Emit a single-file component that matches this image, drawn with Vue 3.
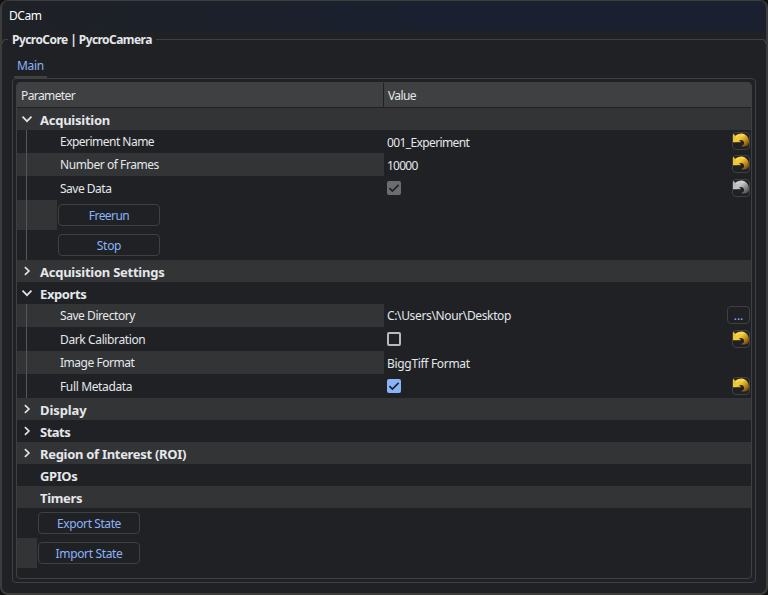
<script setup>
const rows = [
  { type: 'group', label: 'Acquisition', state: 'open', alt: true, h: 22 },
  { type: 'param', label: 'Experiment Name', track: -0.52, value: '001_Experiment', valueTrack: -0.62, reset: 'gold', h: 23, low: true },
  { type: 'param', label: 'Number of Frames', track: -0.44, value: '10000', valueTrack: -0.75, reset: 'gold', alt: true, h: 23, low: true },
  { type: 'param', label: 'Save Data', track: -0.5, check: 'disabled', reset: 'gray', h: 24 },
  { type: 'action', label: 'Freerun', track: -0.55, alt: true, nested: true, h: 30 },
  { type: 'action', label: 'Stop', track: -0.3, nested: true, h: 30 },
  { type: 'group', label: 'Acquisition Settings', state: 'closed', alt: true, h: 22 },
  { type: 'group', label: 'Exports', track: -0.4, state: 'open', h: 22 },
  { type: 'param', label: 'Save Directory', track: -0.44, value: 'C:\\Users\\Nour\\Desktop', valueTrack: -0.36, browse: true, alt: true, h: 23 },
  { type: 'param', label: 'Dark Calibration', track: -0.38, check: 'off', reset: 'gold', h: 24 },
  { type: 'param', label: 'Image Format', track: -0.48, value: 'BiggTiff Format', valueTrack: -0.32, alt: true, h: 23, low: true },
  { type: 'param', label: 'Full Metadata', track: -0.36, check: 'on', reset: 'gold', h: 24 },
  { type: 'group', label: 'Display', track: -0.1, state: 'closed', alt: true, h: 22 },
  { type: 'group', label: 'Stats', track: -0.5, state: 'closed', h: 22 },
  { type: 'group', label: 'Region of Interest (ROI)', track: -0.3, state: 'closed', alt: true, h: 22 },
  { type: 'group', label: 'GPIOs', track: -0.4, h: 22 },
  { type: 'group', label: 'Timers', track: -0.35, alt: true, h: 22 },
  { type: 'action', label: 'Export State', track: -0.42, h: 30 },
  { type: 'action', label: 'Import State', track: -0.36, alt: true, h: 30 }
]
const spacing = (px = -0.25) => ({ letterSpacing: px + 'px' })
</script>

<template>
  <div class="window">
    <header class="titlebar">DCam</header>
    <div class="legend"><i class="edge"></i><b>PycroCore | PycroCamera</b><i class="rule"></i></div>
    <nav class="tabs"><span class="tab">Main</span></nav>
    <main class="pane">
      <div class="tree">
        <div class="head"><span class="hparam">Parameter</span><span class="hvalue">Value</span></div>
        <div
          v-for="row in rows"
          :key="row.label"
          class="row"
          :class="[row.type, { alt: row.alt, nested: row.nested, low: row.low, tall: row.h === 24 }]"
          :style="{ height: row.h + 'px' }"
        >
          <template v-if="row.type === 'group'">
            <span class="arrow">
              <svg v-if="row.state" width="12" height="12" viewBox="0 0 12 12">
                <path :d="row.state === 'open' ? 'M1.5 3.7 6 8.2l4.5-4.5' : 'M3.9 2.1 7.9 6 3.9 9.9'" fill="none" stroke="#e2e3e5" stroke-width="1.7" />
              </svg>
            </span>
            <b :style="spacing(row.track)">{{ row.label }}</b>
          </template>
          <template v-else-if="row.type === 'param'">
            <span class="name" :style="spacing(row.track)">{{ row.label }}</span>
            <span class="cell">
              <span v-if="row.value" class="val" :style="spacing(row.valueTrack)">{{ row.value }}</span>
              <span v-if="row.check" class="check" :class="row.check">
                <svg v-if="row.check !== 'off'" width="14" height="14" viewBox="0 0 14 14">
                  <path d="M2.4 7.2 5.4 10.1 11.6 3.9" fill="none" stroke="#202124" stroke-width="1.6" />
                </svg>
              </span>
              <button v-if="row.browse" class="tool browse">...</button>
              <button v-if="row.reset" class="tool reset">
                <svg width="18" height="18" viewBox="0 0 18 18">
                  <defs>
                    <linearGradient id="gold" x1="0" y1="0" x2="1" y2="1">
                      <stop offset="0" stop-color="#e8b820" />
                      <stop offset=".4" stop-color="#f2cc3c" />
                      <stop offset=".66" stop-color="#c08a18" />
                      <stop offset="1" stop-color="#4a300c" />
                    </linearGradient>
                    <linearGradient id="gray" x1="0" y1="0" x2="1" y2="1">
                      <stop offset="0" stop-color="#a9a9a9" />
                      <stop offset=".4" stop-color="#c6c6c6" />
                      <stop offset=".66" stop-color="#8a8a8a" />
                      <stop offset="1" stop-color="#383838" />
                    </linearGradient>
                  </defs>
                  <path d="M1 1.6 3.3 3.8C5.6 1.6 8.6.9 11.2 1.7c3.8 1.2 6 4.6 5.8 8.6-.1 1.7-.7 2.9-1.7 3.5-1.8 1-4.4 1-6.3.2 1.9-.3 3.1-1.4 3.1-3.1 0-2.1-2.1-3.4-4.8-2.9L9.2 10.2H1Z" :fill="`url(#${row.reset})`" />
                  <path d="M4 5.1C6.3 2.9 9 2.2 11.6 3.2" fill="none" :stroke="row.reset === 'gold' ? '#ffe676' : '#dedede'" stroke-width="1.1" />
                </svg>
              </button>
            </span>
          </template>
          <template v-else>
            <span class="indent"></span>
            <button class="action-button" :style="spacing(row.track)">{{ row.label }}</button>
          </template>
        </div>
      </div>
    </main>
  </div>
</template>

<style>
body {
  margin: 0;
  background: #111211;
}
</style>

<style scoped>
* {
  box-sizing: border-box;
}
.window {
  width: 768px;
  height: 595px;
  display: flex;
  flex-direction: column;
  border: solid #3d3d3c;
  border-width: 1px 2px 2px;
  border-radius: 8px;
  background: #202124;
  color: #e4e7eb;
  font: 12px/16px "Noto Sans", "Open Sans", sans-serif;
  overflow: hidden;
}
button {
  font: inherit;
  padding: 0;
  color: #8ab4f8;
  background: #202124;
  border: 1px solid #3f4042;
  border-radius: 4px;
}
.titlebar {
  flex: none;
  height: 30px;
  padding: 7px 7px 0;
  color: #fff;
  letter-spacing: -0.45px;
  background: linear-gradient(90deg, #1e2126 0, #1c2029 180px, #1b2030 420px);
}
.legend {
  flex: none;
  height: 18px;
  display: flex;
  align-items: center;
}
.legend b {
  width: 148px;
  padding-left: 4px;
  white-space: nowrap;
  letter-spacing: -0.56px;
}
.edge {
  width: 6px;
  height: 5px;
  margin-top: 3px;
  border: solid #3f4042;
  border-width: 1px 0 0 1px;
  border-top-left-radius: 4px;
}
.rule {
  flex: 1;
  height: 5px;
  margin-top: 3px;
  border: solid #3f4042;
  border-width: 1px 1px 0 0;
  border-top-right-radius: 4px;
}
.tabs {
  flex: none;
  height: 29px;
  padding: 8px 12px 0;
}
.tab {
  display: block;
  width: 33px;
  height: 21px;
  padding: 1px 0 0 3px;
  border-bottom: 2px solid #3f4042;
  color: #8ab4f8;
  letter-spacing: -0.3px;
}
.pane {
  width: 744px;
  height: 505px;
  margin-left: 10px;
  padding: 3px;
  border: 1px solid #3f4042;
  border-radius: 4px;
}
.tree {
  height: 497px;
  border: 1px solid #3f4042;
  border-radius: 4px;
  overflow: hidden;
}
.head {
  height: 25px;
  display: flex;
  background: #3f4042;
  border-bottom: 1px solid #202124;
  line-height: 26px;
  letter-spacing: -0.6px;
}
.hparam {
  width: 367px;
  padding-left: 4px;
  border-right: 1px solid #202124;
}
.hvalue {
  padding-left: 4px;
}
.row {
  display: flex;
  align-items: stretch;
}
.group.alt {
  background: #333436;
}
.group b {
  font-size: 13px;
  line-height: 24px;
}
.arrow {
  width: 23px;
  padding: 5px 0 0 4px;
}
.arrow svg {
  display: block;
}
.name {
  width: 367px;
  padding-left: 43px;
  line-height: 23px;
  background: linear-gradient(#55585a, #55585a) 9px 0 / 1px 100% no-repeat;
}
.tall .name {
  line-height: 25px;
}
.alt .name {
  background-color: #333436;
}
.cell {
  flex: 1;
  display: flex;
  align-items: center;
  padding: 0 1px 0 3px;
}
.val {
  line-height: 16px;
}
.low .val {
  padding-top: 2px;
}
.check {
  width: 14px;
  height: 14px;
  border-radius: 2px;
  background: #8ab4f8;
}
.check svg {
  display: block;
}
.check.off {
  background: none;
  border: 2px solid #b9babb;
}
.check.disabled {
  background: #6c6d6f;
}
.tool {
  height: 18px;
  margin-left: auto;
  margin-top: -1px;
}
.reset {
  width: 18px;
}
.reset svg {
  display: block;
  margin: -1px;
}
.browse {
  width: 23px;
  line-height: 18px;
}
.indent {
  width: 20px;
}
.nested .indent {
  width: 40px;
  background: linear-gradient(#55585a, #55585a) 9px 0 / 1px 100% no-repeat;
}
.alt .indent {
  background-color: #333436;
}
.action-button {
  width: 102px;
  height: 22px;
  margin: 4px 0 0 1px;
  padding-top: 2px;
}
</style>
